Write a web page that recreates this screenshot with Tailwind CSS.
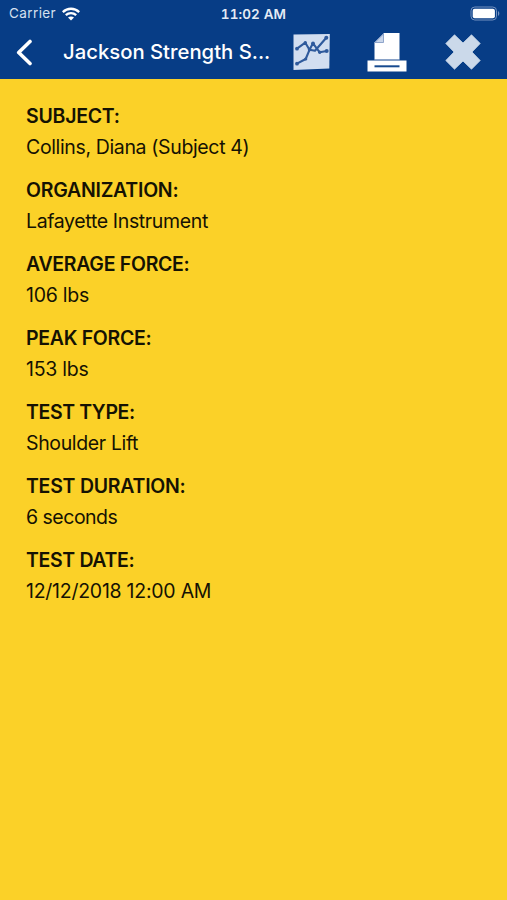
<!DOCTYPE html>
<html lang="en">
<head>
  <meta charset="UTF-8" />
  <meta name="viewport" content="width=device-width, initial-scale=1.0" />
  <title>Jackson Strength</title>
  <script src="https://cdn.jsdelivr.net/npm/@tailwindcss/browser@4"></script>
</head>
<body class="h-screen flex flex-col overflow-hidden bg-[#fbd128] font-[Inter,sans-serif]">
  <header class="h-[79px] shrink-0 bg-[#073d86] text-white">
    <!-- status bar -->
    <div class="h-[27px] grid grid-cols-3 items-center pl-[8px] pr-[8px] text-[13.5px]">
      <div class="flex items-center gap-[6px] pl-px text-[#d5e0ef]">
        <span class="w-[47px] whitespace-nowrap tracking-[0.4px]">Carrier</span>
        <svg class="w-[18px] h-[14px]" viewBox="0 0 18 14" fill="none" stroke="#fff" stroke-width="2.3">
          <path d="M0.8 5.1C5.5 0.6 12.5 0.6 17.2 5.1" />
          <path d="M3.8 8.2C6.8 5.3 11.2 5.3 14.2 8.2" />
          <path d="M9 13.6L6 10.6C7.7 9 10.3 9 12 10.6Z" fill="#fff" stroke="none" />
        </svg>
      </div>
      <div class="pt-px text-center text-[13.5px] font-semibold tabular-nums tracking-[0.1px] text-[#e4ebf5] whitespace-nowrap">11:02 AM</div>
      <div class="flex justify-end">
        <svg class="w-[31px] h-[15px] -mr-[2px]" viewBox="0 0 31 15">
          <rect x="1" y="1" width="25.5" height="13" rx="3.8" fill="none" stroke="#7592bf" />
          <rect x="2.7" y="2.7" width="22.2" height="9.6" rx="2" fill="#fff" />
          <path d="M28 5v5c1.8-.9 1.8-4.1 0-5z" fill="#7592bf" />
        </svg>
      </div>
    </div>

    <!-- nav bar -->
    <div class="h-[50px] flex items-center pl-[16px] pr-[24px]">
      <button class="w-[47px]" aria-label="Back">
        <svg class="w-[17px] h-[27px]" viewBox="0 0 17 27" fill="none" stroke="#fff" stroke-width="3.6" stroke-linecap="round" stroke-linejoin="round">
          <path d="M14 2.5L2.7 13.5L14 24.5" />
        </svg>
      </button>
      <h1 class="w-[230px] pt-px text-[20.3px] font-medium whitespace-nowrap">Jackson Strength S...</h1>
      <button aria-label="Chart">
        <svg class="w-[38px] h-[38px]" viewBox="0 0 38 38">
          <path d="M.5 1.5L36.8 1L36.3 35.5L.5 37Z" fill="#d2def0" />
          <g fill="none" stroke="#2f5a9c" stroke-width="2.1" stroke-linejoin="round">
            <path d="M4 15.7L12.3 9.7L16.5 16.8L20 10.3L26.7 19.3L33.7 18" />
            <path d="M4 30.7L12.7 26L16.5 16.8L22 17.8L33.3 4.7" />
          </g>
          <g fill="#2f5a9c">
            <circle cx="4" cy="15.7" r="1.9" />
            <circle cx="12.3" cy="9.7" r="1.7" />
            <circle cx="16.5" cy="16.8" r="1.7" />
            <circle cx="20" cy="10.3" r="1.9" />
            <circle cx="33.3" cy="4.7" r="2" />
            <circle cx="4" cy="30.7" r="1.9" />
            <circle cx="12.7" cy="26" r="1.6" />
            <circle cx="26.7" cy="19.3" r="1.7" />
            <circle cx="33.7" cy="18" r="2" />
          </g>
        </svg>
      </button>
      <button class="ml-[36px]" aria-label="Print">
        <svg class="w-[40px] h-[40px]" viewBox="0 0 40 40">
          <path d="M17 1H32.5V27.5H7.5V10.5Z" fill="#fff" />
          <path d="M16.5 2V10.500H8Z" fill="#c9d6ea" stroke="#7893bf" stroke-width=".8" />
          <path d="M.5 28.5H39.5V39.5H.5Z" fill="#fff" />
          <path d="M7.5 28H32.5" stroke="#8fa6ca" stroke-width="1" />
          <path d="M7.5 34.3H32.5" stroke="#174a8f" stroke-width="2" />
        </svg>
      </button>
      <button class="ml-[38px]" aria-label="Close">
        <svg class="w-[36px] h-[36px]" viewBox="0 0 36 36">
          <path d="M9.5 .8L18 9L26.5 .8L35.2 9.5L27 18L35.2 26.5L26.5 35.2L18 27L9.5 35.2L.8 26.5L9 18L.8 9.5Z" fill="#cbd9ea" stroke="#cbd9ea" stroke-width=".8" stroke-linejoin="round" />
        </svg>
      </button>
    </div>
  </header>

  <!-- test details -->
  <dl class="flex flex-col gap-3 pt-[22px] pl-[26px] text-[19.5px] leading-[31px] text-[#151203] whitespace-nowrap">
    <div>
      <dt class="font-semibold tracking-[-0.25px]">SUBJECT:</dt>
      <dd class="tracking-[-0.36px]">Collins, Diana (Subject 4)</dd>
    </div>
    <div>
      <dt class="font-semibold tracking-[-0.25px]">ORGANIZATION:</dt>
      <dd class="tracking-[-0.36px]">Lafayette Instrument</dd>
    </div>
    <div>
      <dt class="font-semibold tracking-[-0.3px]">AVERAGE FORCE:</dt>
      <dd class="tracking-[-0.25px]">106 lbs</dd>
    </div>
    <div>
      <dt class="font-semibold tracking-[-0.3px]">PEAK FORCE:</dt>
      <dd class="tracking-[-0.25px]">153 lbs</dd>
    </div>
    <div>
      <dt class="font-semibold tracking-[-0.4px]">TEST TYPE:</dt>
      <dd class="tracking-[-0.36px]">Shoulder Lift</dd>
    </div>
    <div>
      <dt class="font-semibold tracking-[-0.25px]">TEST DURATION:</dt>
      <dd class="tracking-[-0.5px]">6 seconds</dd>
    </div>
    <div>
      <dt class="font-semibold tracking-[-0.35px]">TEST DATE:</dt>
      <dd class="tracking-[-0.25px]">12/12/2018 12:00 AM</dd>
    </div>
  </dl>
</body>
</html>
